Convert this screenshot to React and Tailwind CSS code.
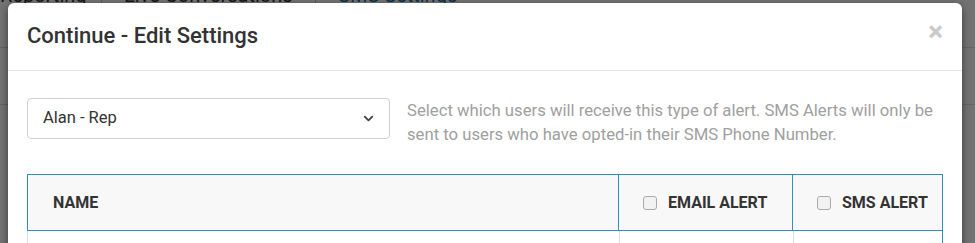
import { ChevronDown } from 'lucide-react'

export default function App() {
  return (
    <div className="relative w-[975px] h-[243px] overflow-hidden bg-white font-['Roboto',sans-serif]">
      {/* page behind the modal */}
      <div className="-mt-[17px] flex items-center h-[24px] text-[20px] text-[#333] whitespace-nowrap">
        <span className="w-[105px] -ml-[4px] pl-[4px]">Reporting</span>
        <span className="w-px h-[30px] bg-[#ccc]" />
        <span className="pl-[22px] w-[213px]">Live Conversations</span>
        <span className="w-px h-[30px] bg-[#ccc]" />
        <span className="pl-[22px] text-[#1a6fa8]">SMS Settings</span>
      </div>
      <div className="mt-[40px] h-px bg-[#ddd]" />
      <div className="mt-[56px] h-px bg-[#ddd]" />

      {/* backdrop */}
      <div className="absolute inset-0 bg-black/55" />

      {/* modal */}
      <div className="absolute left-[8px] top-[3px] w-[954px] h-[260px] bg-white rounded-[6px] shadow-[0_3px_9px_rgba(0,0,0,0.5)]">
        <div className="flex items-center justify-between h-[68px] pl-[19px] pr-[19px] border-b border-[#e5e5e5]">
          <h4 className="text-[22px] font-medium text-[#333] leading-none -mt-[2px]">Continue - Edit Settings</h4>
          <span className="text-[28px] font-bold text-[#c9c9c9] leading-none -mt-[10px]">×</span>
        </div>

        <div className="px-[19px] pt-[27px]">
          <div className="flex items-start gap-[17px]">
            <div className="w-[363px] h-[41px] shrink-0 flex items-center justify-between pl-[15px] pr-[13px] border border-[#d0d0d0] rounded-[4px]">
              <span className="text-[16.5px] text-[#333]">Alan - Rep</span>
              <ChevronDown size={15} strokeWidth={3} className="text-[#444]" />
            </div>
            <p className="w-[532px] text-[16.7px] leading-[24px] text-[#a0a0a0] mt-[1px]">
              Select which users will receive this type of alert. SMS Alerts will only be sent to users who have opted-in their SMS Phone Number.
            </p>
          </div>

          <div className="mt-[27px] border border-[#2e8fc0] border-b-0">
            <div className="flex h-[56px] bg-[#f8f8f8] border-b border-[#2e8fc0] text-[16px] font-bold text-[#333] uppercase">
              <div className="w-[591px] flex items-center pl-[25px] border-r border-[#2e8fc0]">Name</div>
              <div className="w-[174px] flex items-center pl-[24px] gap-[11px] border-r border-[#2e8fc0]">
                <span className="w-[14px] h-[14px] rounded-[3px] border border-[#aaa] bg-[#f2f2f2]" />
                Email Alert
              </div>
              <div className="flex-1 flex items-center pl-[24px] gap-[11px]">
                <span className="w-[14px] h-[14px] rounded-[3px] border border-[#aaa] bg-[#f2f2f2]" />
                SMS Alert
              </div>
            </div>
            <div className="flex h-[40px] -ml-px border-l border-[#ddd]">
              <div className="w-[592px] border-r border-[#ddd]" />
              <div className="w-[174px] border-r border-[#ddd]" />
            </div>
          </div>
        </div>
      </div>
    </div>
  )
}
